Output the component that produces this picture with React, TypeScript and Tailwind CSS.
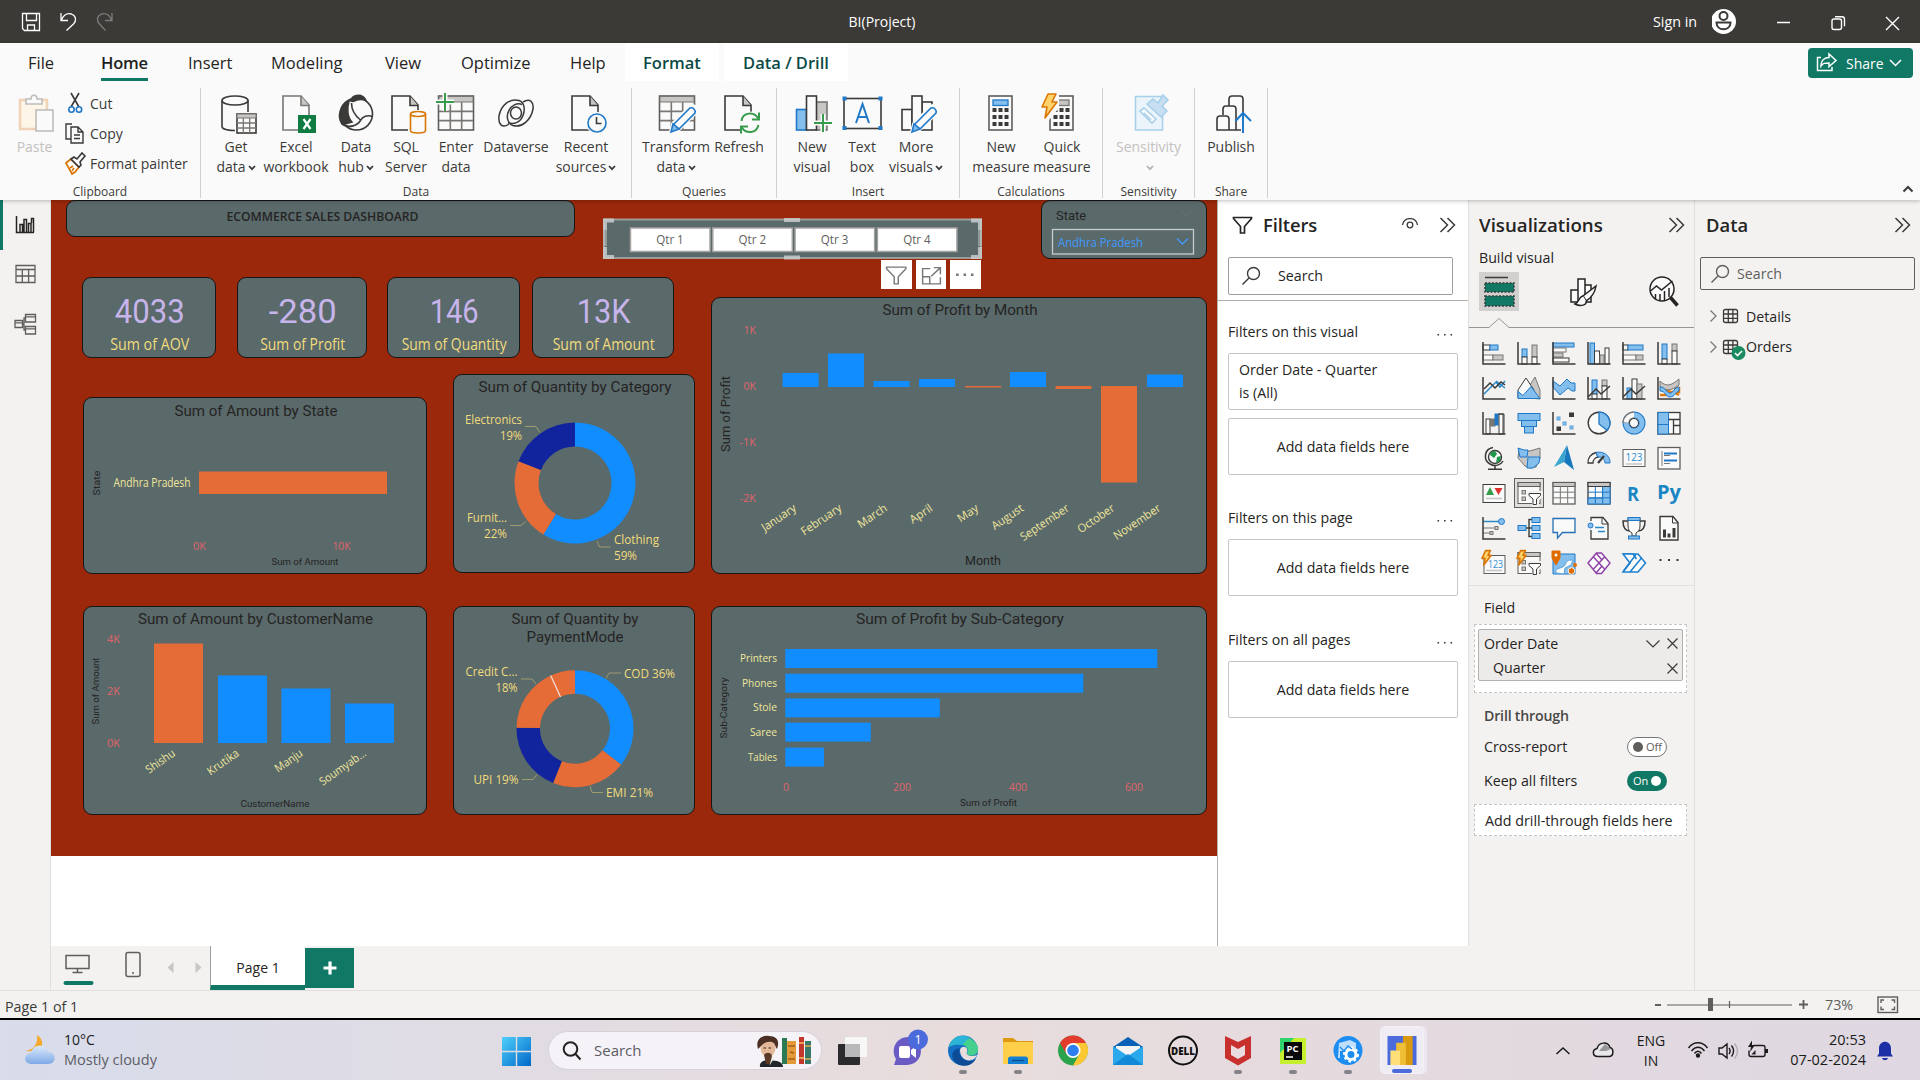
import type { ReactNode } from 'react';

const DARK = '#3b3a38';
const BLUE = '#1f78c8';
const SKY = '#83beec';
const GREY = '#c8c6c4';
const MID = '#797673';
const PAPER = '#fafafa';

type Kids = { children: ReactNode };

/* ---------- ribbon ---------- */

function Ico({ children, w = 40, h = 44 }: Kids & { w?: number; h?: number }) {
  return (
    <svg width={w} height={h} viewBox={`0 0 ${w} ${h}`} fill="none" stroke={DARK} strokeWidth="1.6" className="shrink-0 overflow-visible">
      {children}
    </svg>
  );
}

const Page = ({ x = 7, stroke = '#605e5c' }: { x?: number; stroke?: string }) => (
  <g stroke={stroke} fill={PAPER}>
    <path d={`M${x} 4h18l8 9v25h-26z`} />
    <path d={`M${x + 18} 4v9.5h8`} fill={GREY} />
  </g>
);

const GreenPlus = ({ x, y }: { x: number; y: number }) => (
  <g>
    <path d={`M${x - 9} ${y}h18M${x} ${y - 9}v18`} stroke={PAPER} strokeWidth="5" />
    <path d={`M${x - 9} ${y}h18M${x} ${y - 9}v18`} stroke="#379c4c" strokeWidth="2" />
  </g>
);

const Pencil = ({ x = 15, y = 16 }: { x?: number; y?: number }) => (
  <g transform={`translate(${x} ${y})`}>
    <path d="M0 24l2-8L19 -1a4 4 0 0 1 6 5L8 21z" fill={PAPER} stroke={PAPER} strokeWidth="4" />
    <path d="M2 17L19 0a4 4 0 0 1 5 5L8 21z" fill={PAPER} stroke={BLUE} />
    <path d="M0 24l2-8 6 5z" fill={SKY} stroke={BLUE} />
  </g>
);

const Bolt = ({ x = 0, y = 0, s = 1 }: { x?: number; y?: number; s?: number }) => (
  <path
    transform={`translate(${x} ${y}) scale(${s})`}
    d="M6 1h8l-4 8h5L3 25l2-11H0z"
    fill="#ffd26b"
    stroke="#d97706"
    strokeWidth={1.6 / s}
    strokeLinejoin="round"
  />
);

const Calculator = ({ screen, edge }: { screen: string; edge: string }) => (
  <g>
    <rect x="8" y="4" width="23" height="34" fill={PAPER} stroke="#605e5c" />
    <rect x="12" y="8" width="15" height="5.5" fill={screen} stroke={edge} strokeWidth="1.3" />
    <g fill={DARK} stroke="none">
      {[16, 23, 30].map((y) =>
        [11.5, 17.5, 23.5].map((x) => <rect key={`${x}-${y}`} x={x} y={y} width="4" height="4" />),
      )}
    </g>
  </g>
);

const gridLines = (x: number, y: number, w: number, h: number) =>
  `M${x} ${y + h / 3}h${w}M${x} ${y + (2 * h) / 3}h${w}M${x + w / 3} ${y}v${h}M${x + (2 * w) / 3} ${y}v${h}`;

const icons = {
  getData: (
    <Ico>
      <path d="M6 8.500v26c0 2.500 6 4 13 4s13-1.500 13-4v-26" fill={PAPER} />
      <ellipse cx="19" cy="8.500" rx="13" ry="4.500" fill={PAPER} />
      <rect x="19" y="20" width="23" height="22" fill={PAPER} stroke="none" />
      <rect x="21" y="22" width="19" height="19" fill={PAPER} />
      <rect x="21" y="22" width="19" height="4" fill={GREY} stroke={MID} strokeWidth="1" />
      <path d={gridLines(21, 26, 19, 15)} stroke={MID} strokeWidth="1.300" />
    </Ico>
  ),
  excel: (
    <Ico>
      <Page stroke="#797673" />
      <rect x="22" y="23" width="18" height="18" fill="#107c41" stroke="none" />
      <path d="M27.500 27l7 10M34.500 27l-7 10" stroke="#fff" strokeWidth="2.200" />
    </Ico>
  ),
  hub: (
    <Ico>
      <circle cx="20.500" cy="22" r="16" fill={PAPER} />
      <path d="M13 9C4 12 1 25 6 32c2 1 6-1 10-2-5-5-5-14-3-21z" fill={DARK} />
      <path d="M14.500 9C17 1.500 27 1.500 30 8.500c-5-2-9-1-13 1z" fill={DARK} />
      <path d="M15.500 11c0 7 4 13 9 17M6.500 32.500c7 4 15 1 18-4 2-4 7-6 12-4" />
    </Ico>
  ),
  sql: (
    <Ico>
      <Page x={6} stroke={DARK} />
      <path d="M22 18h20v24h-20z" fill={PAPER} stroke="none" />
      <path d="M24.500 22v16.500c0 1.500 3.500 2.500 7.500 2.500s7.500-1 7.500-2.500V22" fill={PAPER} stroke="#d97706" />
      <ellipse cx="32" cy="22" rx="7.500" ry="2.500" fill={PAPER} stroke="#d97706" />
    </Ico>
  ),
  enter: (
    <Ico>
      <rect x="2.500" y="4" width="35" height="34" fill={PAPER} stroke="#605e5c" />
      <rect x="3" y="4.500" width="34" height="5.500" fill={GREY} stroke={MID} strokeWidth="1" />
      <path d={gridLines(3, 10, 34, 28)} stroke={MID} />
      <GreenPlus x={9} y={10} />
    </Ico>
  ),
  dataverse: (
    <Ico>
      <path d="M13 32C6 37 2 32 3 24 5 13 14 6 23 8.500c6 2 6 10 4 15-2 6-9 10-15 7" strokeWidth="1.500" />
      <path d="M27 10c7-4 11 0 10 7-2 11-11 19-20 16.500-6-2-7-10-4-15 2-5 8-8 13-6" strokeWidth="1.500" />
      <ellipse cx="20" cy="21" rx="5.500" ry="6" strokeWidth="1.500" />
    </Ico>
  ),
  recent: (
    <Ico>
      <Page x={6} stroke={DARK} />
      <circle cx="31" cy="31" r="11" fill={PAPER} stroke="none" />
      <circle cx="31" cy="31" r="9" fill={PAPER} stroke={BLUE} />
      <path d="M30.500 25v6.500h5" />
    </Ico>
  ),
  transform: (
    <Ico>
      <rect x="3.500" y="4" width="35" height="34" fill={PAPER} stroke="#605e5c" />
      <rect x="4" y="4.500" width="34" height="5.500" fill={GREY} stroke={MID} strokeWidth="1" />
      <path d={gridLines(4, 10, 34, 28)} stroke={MID} />
      <Pencil x={15} y={16} />
    </Ico>
  ),
  refresh: (
    <Ico>
      <Page x={6} stroke={DARK} />
      <circle cx="31" cy="31" r="11.500" fill={PAPER} stroke="none" />
      <g stroke="#379c4c" strokeWidth="2">
        <path d="M22.500 29c1-9 13-10 17-2M39.500 33c-2 9-13 9-17 2" />
        <path d="M40 20.500v7h-7M22 41.500v-7h7" />
      </g>
    </Ico>
  ),
  newVisual: (
    <Ico>
      <rect x="4.500" y="17.500" width="10" height="20.500" fill={SKY} stroke={BLUE} />
      <rect x="24" y="10" width="11" height="28" fill={GREY} stroke={MID} />
      <rect x="14.500" y="4" width="10" height="34" fill={PAPER} />
      <GreenPlus x={31} y={31} />
    </Ico>
  ),
  textBox: (
    <Ico>
      <rect x="2" y="6.500" width="37" height="30" fill={PAPER} />
      <path d="M14 31l6.500-19L27 31M16 25h9" stroke={BLUE} strokeWidth="2" />
      <g fill={BLUE} stroke="none">
        <rect x="0.500" y="4.500" width="4" height="4" />
        <rect x="36.500" y="4.500" width="4" height="4" />
        <rect x="0.500" y="34" width="4" height="4" />
        <rect x="36.500" y="34" width="4" height="4" />
      </g>
    </Ico>
  ),
  moreVisuals: (
    <Ico>
      <rect x="6" y="17.500" width="10" height="20.500" fill={PAPER} />
      <rect x="26" y="10" width="10" height="28" fill={PAPER} />
      <rect x="16" y="4" width="10" height="34" fill={PAPER} />
      <Pencil x={16} y={16} />
    </Ico>
  ),
  newMeasure: (
    <Ico>
      <Calculator screen={SKY} edge={BLUE} />
    </Ico>
  ),
  quickMeasure: (
    <Ico>
      <Calculator screen={GREY} edge={MID} />
      <path d="M5 2h12v14l-10 12H3z" fill={PAPER} stroke="none" />
      <Bolt y={1} />
    </Ico>
  ),
  sensitivity: (
    <Ico>
      <g stroke="#a8d0ea" fill="#eaf4fa">
        <path d="M6.500 4.500h27v33.500h-27z" />
        <path d="M11 19l4-3 12 11-4 4z" fill={PAPER} />
        <path d="M15 21l7 7" />
        <path d="M18 12l6-5 5 4 5-8 5 5-6 6 5 5-6 6z" fill="#c7dff0" />
      </g>
    </Ico>
  ),
  publish: (
    <Ico>
      <path d="M18 14V7c0-2 1-3 3-3h8c2 0 3 1 3 3v31" fill={PAPER} />
      <path d="M12 23v-6c0-2 1-3 3-3h7c2 0 3 1 3 3v21" fill={PAPER} />
      <path d="M6 38V27c0-2 1-3 3-3h6c2 0 3 1 3 3v11zM6 38h26" fill={PAPER} />
      <path d="M33 21v20" stroke={PAPER} strokeWidth="6" />
      <path d="M32 41V22M24.500 29l7.500-8 8 8" stroke={BLUE} strokeWidth="2" />
    </Ico>
  ),
};

const Caret = ({ color = DARK }: { color?: string }) => (
  <svg width="8" height="6" viewBox="0 0 8 6" className="ml-0.5 inline-block" fill="none" stroke={color} strokeWidth="1.800">
    <path d="M1 1l3 3.200L7 1" />
  </svg>
);

function Cmd({ icon, a, b, caret, width, dim }: { icon: ReactNode; a: string; b?: string; caret?: boolean; width: string; dim?: boolean }) {
  return (
    <div className={`flex shrink-0 flex-col items-center ${width} ${dim ? 'text-[#c3c1bf]' : ''}`}>
      {icon}
      <span className="mt-px h-[20px] text-[14px] leading-[20px] tracking-[-0.050px] whitespace-nowrap">{a}</span>
      <span className="h-[20px] text-[14px] leading-[20px] whitespace-nowrap">
        {b}
        {caret && <Caret color={dim ? '#b5b3b1' : DARK} />}
      </span>
    </div>
  );
}

function Group({ label, width, pad = '', children }: Kids & { label: string; width: string; pad?: string }) {
  return (
    <div className={`mt-[7px] flex h-[110px] shrink-0 flex-col border-r border-[#d2d0ce] ${width}`}>
      <div className={`flex h-[97px] shrink-0 pt-[4px] ${pad}`}>{children}</div>
      <div className="h-[13px] text-center text-[12px] leading-[14px] text-[#3b3a39]">{label}</div>
    </div>
  );
}

function TitleBar() {
  return (
    <header className="flex h-[43px] shrink-0 items-center bg-[#3b3a37] text-white">
      <svg width="140" height="43" viewBox="0 0 140 43" fill="none" stroke="#fff" strokeWidth="1.300">
        <path d="M22.500 13.500h17v17H24.500l-2-2zM26.500 13.500v7h10v-7M27.500 30.500v-5.500h7v5.500" />
        <path d="M61 13v7.500h7M61.500 20c2-5 6-7 10-6 5 2 5 7 2 10l-7 6.500" />
        <path d="M112 13v7.500h-7M111.500 20c-2-5-6-7-10-6-5 2-5 7-2 10l6 6.500" stroke="#7d7c7a" />
      </svg>
      <div className="w-[1484px] text-center text-[14px]">BI(Project)</div>
      <div className="ml-[29px] text-[14.300px]">Sign in</div>
      <svg width="208" height="43" viewBox="1712 0 208 43" className="ml-auto" fill="none" stroke="#fff" strokeWidth="1.400">
        <circle cx="1723.500" cy="21.500" r="12.500" fill="#fff" stroke="none" />
        <circle cx="1723.500" cy="16" r="4" stroke={DARK} strokeWidth="2" />
        <path d="M1716.500 22.500h14c0 9-14 9-14 0z" stroke={DARK} strokeWidth="2" />
        <path d="M1777 22.500h13M1886 17l13 13M1899 17l-13 13" />
        <rect x="1832" y="19" width="9.500" height="10.500" rx="2" />
        <path d="M1835 16.800h7c2 0 2.500 1 2.500 2.500v7" />
      </svg>
    </header>
  );
}

function Ribbon() {
  return (
    <div className="relative z-10 h-[157px] shrink-0 bg-[#fafafa] shadow-[0_1px_4px_rgba(0,0,0,0.25)]">
      <nav className="flex h-[38px] text-[16.500px] leading-[39px] text-[#252423]">
        <span className="ml-[28px] w-[73px]">File</span>
        <span className="w-[87px] font-semibold text-[#201f1e]">
          <span className="inline-block h-[38px] border-b-[3px] border-[#117865] tracking-[-0.200px]">Home</span>
        </span>
        <span className="w-[83px]">Insert</span>
        <span className="w-[114px]">Modeling</span>
        <span className="w-[76px]">View</span>
        <span className="w-[109px]">Optimize</span>
        <span className="w-[55px]">Help</span>
        <span className="w-[94px] bg-white text-center font-semibold text-[#0c4a45]">Format</span>
        <span className="ml-[5px] w-[124px] bg-white text-center font-semibold text-[#0c4a45]">Data / Drill</span>
        <span className="mt-[5px] mr-[7px] ml-auto flex h-[30px] w-[105px] items-center rounded bg-[#117865] text-white">
          <svg width="38" height="30" viewBox="0 0 38 30" fill="none" stroke="#fff" strokeWidth="1.500">
            <path d="M13 9.500H9.500v13h14.500V19" />
            <path d="M13 18c0-6 4-8.500 8-8.500V6l7 6.500-7 6v-3.500c-4 0-6 0-8 3z" />
          </svg>
          <span className="text-[14px]">Share</span>
          <svg width="15" height="10" viewBox="0 0 15 10" className="ml-1" fill="none" stroke="#fff" strokeWidth="1.500">
            <path d="M2 2l5.500 5.500L13 2" />
          </svg>
        </span>
      </nav>
      <div className="flex h-[119px] text-[#3b3a39]">
        <Group label="Clipboard" width="w-[201px]">
          <div className="flex w-[62px] shrink-0 flex-col items-center pl-[7px] text-[#c3c1bf]">
            <Ico>
              <g opacity="0.6">
                <path d="M5 8h27v29H5z" fill="#fff3dd" stroke="#eab98a" strokeWidth="2.500" />
                <path d="M11 12V7h5c0-5 6-5 6 0h5v5z" fill={PAPER} stroke="#979593" />
                <rect x="21" y="18" width="17" height="21" fill={PAPER} stroke="#979593" />
              </g>
            </Ico>
            <span className="mt-px text-[14px] leading-[20px]">Paste</span>
          </div>
          <div className="-mt-[4px] flex flex-col text-[14px]">
            <span className="flex h-[30px] items-center">
              <Ico w={28} h={24}>
                <path d="M9 2l8 14M17 2L9 16" />
                <circle cx="9.500" cy="18.500" r="2.700" stroke={BLUE} />
                <circle cx="17" cy="18.500" r="2.700" stroke={BLUE} />
              </Ico>
              Cut
            </span>
            <span className="flex h-[30px] items-center">
              <Ico w={28} h={24}>
                <path d="M10 3H4v15h5M9 6h7l5 5v11H9zM16 6v5h5M12 14h6M12 17.500h6" strokeWidth="1.400" />
              </Ico>
              Copy
            </span>
            <span className="flex h-[30px] items-center whitespace-nowrap">
              <Ico w={28} h={24}>
                <path d="M4 12l5-4 8 8-4 5-3 2z" fill="#fff" stroke="#d97706" strokeWidth="1.800" />
                <path d="M8 17l3-2M10 20l2-3" stroke="#d97706" />
                <path d="M9 8l3-2 3 2 5-6 3 3-5 6 1 3-2 2z" fill={PAPER} />
              </Ico>
              Format painter
            </span>
          </div>
        </Group>
        <Group label="Data" width="w-[431px]" pad="pl-[5px]">
          <Cmd width="w-[60px]" icon={icons.getData} a="Get" b="data" caret />
          <Cmd width="w-[60px]" icon={icons.excel} a="Excel" b="workbook" />
          <Cmd width="w-[60px]" icon={icons.hub} a="Data" b="hub" caret />
          <Cmd width="w-[40px]" icon={icons.sql} a="SQL" b="Server" />
          <Cmd width="w-[60px]" icon={icons.enter} a="Enter" b="data" />
          <Cmd width="w-[60px]" icon={icons.dataverse} a="Dataverse" />
          <Cmd width="w-[80px]" icon={icons.recent} a="Recent" b="sources" caret />
        </Group>
        <Group label="Queries" width="w-[145px]" pad="pl-[8px]">
          <Cmd width="w-[72px]" icon={icons.transform} a="Transform" b="data" caret />
          <Cmd width="w-[54px]" icon={icons.refresh} a="Refresh" />
        </Group>
        <Group label="Insert" width="w-[183px]" pad="pl-[10px]">
          <Cmd width="w-[50px]" icon={icons.newVisual} a="New" b="visual" />
          <Cmd width="w-[50px]" icon={icons.textBox} a="Text" b="box" />
          <Cmd width="w-[58px]" icon={icons.moreVisuals} a="More" b="visuals" caret />
        </Group>
        <Group label="Calculations" width="w-[143px]" pad="pl-[10px]">
          <Cmd width="w-[62px]" icon={icons.newMeasure} a="New" b="measure" />
          <Cmd width="w-[60px]" icon={icons.quickMeasure} a="Quick" b="measure" />
        </Group>
        <Group label="Sensitivity" width="w-[92px]">
          <Cmd width="w-[91px]" icon={icons.sensitivity} a="Sensitivity" caret dim />
        </Group>
        <Group label="Share" width="w-[73px]">
          <Cmd width="w-[72px]" icon={icons.publish} a="Publish" />
        </Group>
        <svg width="12" height="8" viewBox="0 0 12 8" className="mt-[104px] mr-[6px] ml-auto" fill="none" stroke={DARK} strokeWidth="2">
          <path d="M1.500 6.500L6 2l4.500 4.500" />
        </svg>
      </div>
    </div>
  );
}

/* ---------- left rail ---------- */

function Rail() {
  return (
    <aside className="flex w-[51px] shrink-0 flex-col border-r border-[#e1dfdd] bg-[#f3f2f1]">
      {[0, 1, 2].map((i) => (
        <div key={i} className={`flex h-[50px] items-center border-l-[3px] pl-[9px] ${i === 0 ? 'border-[#117865]' : 'border-transparent'}`}>
          <svg width="26" height="26" viewBox="0 1 26 26" fill="none" stroke={i === 0 ? '#252423' : '#605e5c'} strokeWidth={i === 0 ? 1.5 : 1.3}>
            {i === 0 && <path d="M4.500 5v16.500h17.500M8 21.500v-8h2.500v8M12 21.500V8.500h2.500v13M16.500 21.500v-9H19v9M19.500 12V7.500H21.500v14" />}
            {i === 1 && <path d="M4 4.500h19v17H4zM4 8.500h19M4 15h19M10.300 8.500v13M16.600 8.500v13" />}
            {i === 2 && <path d="M13.500 3.500h10v7.500h-10zM13.500 15.500h10v7.500h-10zM3 9.500h7.500v7H3zM10.500 13h1.500V7h1.500M12 13v6h1.500M13.500 5.800h10M13.500 17.800h10M3 11.800h7.500" />}
          </svg>
        </div>
      ))}
    </aside>
  );
}

/* ---------- report canvas ---------- */

type TProps = { x: number; y: number; w?: number; s?: number; c?: string; a?: 'start' | 'middle' | 'end'; r?: number; f?: 'din' | 'ui'; b?: number; children: string };

function T({ x, y, w, s = 12, c = '#252423', a = 'middle', r, f = 'ui', b, children }: TProps) {
  return (
    <text
      x={x}
      y={y}
      fontSize={s}
      fill={c}
      textAnchor={a}
      fontWeight={b}
      textLength={w}
      lengthAdjust="spacingAndGlyphs"
      fontFamily={f === 'din' ? 'Roboto, sans-serif' : '"Open Sans", sans-serif'}
      transform={r ? `rotate(${r} ${x} ${y})` : undefined}
    >
      {children}
    </text>
  );
}

const YEL = '#f2dc7d';
const PALE = '#f0e69b';
const RED = '#e0656b';
const CB = '#118dff';
const CO = '#e66c37';
const CN = '#12239e';

/* A rounded report tile; its drawing shares the page coordinate system. */
function Tile({ x, y, w, h, children }: Kids & { x: number; y: number; w: number; h: number }) {
  return (
    <div className="absolute overflow-hidden rounded-[9px] border border-[#161616] bg-[#5a696a]" style={{ left: x - 51, top: y - 200, width: w, height: h }}>
      <svg className="-mt-px -ml-px block" width={w} height={h} viewBox={`${x} ${y} ${w} ${h}`}>
        {children}
      </svg>
    </div>
  );
}

function Ring({ cx, cy, R, r, parts }: { cx: number; cy: number; R: number; r: number; parts: [number, number, string][] }) {
  const p = (rad: number, deg: number) => {
    const t = ((deg - 90) * Math.PI) / 180;
    return `${cx + rad * Math.cos(t)} ${cy + rad * Math.sin(t)}`;
  };
  return (
    <g>
      {parts.map(([a, b, c]) => {
        const big = b - a > 180 ? 1 : 0;
        return <path key={a} fill={c} d={`M${p(R, a)}A${R} ${R} 0 ${big} 1 ${p(R, b)}L${p(r, b)}A${r} ${r} 0 ${big} 0 ${p(r, a)}Z`} />;
      })}
    </g>
  );
}

const kpis: [number, number, string, number, string, number][] = [
  [82, 134, '4033', 70, 'Sum of AOV', 79],
  [237, 130, '-280', 68, 'Sum of Profit', 85],
  [387, 133, '146', 49, 'Sum of Quantity', 105],
  [532, 142, '13K', 54, 'Sum of Amount', 102],
];

const months: [string, number, number, number, string, number][] = [
  ['January', 782.6, 373, 14, CB, 39],
  ['February', 828, 353.5, 33.5, CB, 46],
  ['March', 873.5, 381, 6, CB, 33],
  ['April', 919, 379, 8, CB, 25],
  ['May', 965, 386, 1.5, CO, 23],
  ['August', 1010, 372, 15, CB, 36],
  ['September', 1055.5, 386, 3, CO, 56],
  ['October', 1101, 386, 96.5, CO, 42],
  ['November', 1147, 374.5, 12.5, CB, 54],
];

const customers: [string, number, number, string, number][] = [
  ['Shishu', 154, 643.5, CO, 33],
  ['Krutika', 218, 675.5, CB, 36],
  ['Manju', 281.5, 688.5, CB, 31],
  ['Soumyab...', 345, 703.5, CB, 54],
];

const subs: [string, number, number, number][] = [
  ['Printers', 649, 372, 37],
  ['Phones', 673.7, 298, 35],
  ['Stole', 698.4, 154.5, 24],
  ['Saree', 722.6, 85.5, 27],
  ['Tables', 747.6, 38.7, 29],
];

function Report() {
  return (
    <div className="relative h-[656px] shrink-0 bg-[#9b280b]">
      <Tile x={66} y={200} w={509} h={37}>
        <T x={322.5} y={221} w={192} s={12.5} b={600}>ECOMMERCE SALES DASHBOARD</T>
      </Tile>

      {/* quarter slicer with its selection frame */}
      <svg className="absolute top-[16px] left-[551px]" width="382" height="46" viewBox="602 216 382 46" fill="none">
        <rect x="604" y="219.500" width="377" height="38.500" fill="#5a696a" stroke="#a5b0b0" strokeOpacity="0.8" strokeWidth="2" />
        {['Qtr 1', 'Qtr 2', 'Qtr 3', 'Qtr 4'].map((q, i) => (
          <g key={q}>
            <rect x={630.5 + i * 82.3} y="228" width="79.500" height="23.500" fill="#fff" stroke="#a7a3a1" strokeWidth="1.500" />
            <T x={670 + i * 82.3} y={244} w={27.5} s={12} c="#605e5c">{q}</T>
          </g>
        ))}
        <g stroke="#c8cccc" strokeOpacity="0.85" strokeWidth="4">
          <path d="M614 220.500h-9v10M971 220.500h9v10M614 257h-9v-10M971 257h9v-10M784 220h16M784 257.500h16" />
          <path d="M605 231v15M980 231v15" strokeOpacity="0.5" />
        </g>
      </svg>
      <div className="absolute top-[59.500px] left-[830px] flex gap-[4px]">
        {[0, 1, 2].map((i) => (
          <svg key={i} width="30.500" height="29.500" viewBox="0 0 30 29" className="bg-white" fill="none" stroke="#797775" strokeWidth="1.400">
            {i === 0 && <path d="M5.500 7h19v1.500L17 16.500v7h-4v-7L5.500 8.500z" />}
            {i === 1 && <path d="M14 8.500H6.500v15h17.500V17M6.500 16.500h7v7M15 16l8.500-8M17.500 7.500h6.500v6.500" />}
            {i === 2 && <path d="M6 14.500h2.500M13.300 14.500h2.500M20.600 14.500h2.500" strokeWidth="2.500" />}
          </svg>
        ))}
      </div>

      <Tile x={1041} y={200} w={166} h={59}>
        <T x={1056} y={220} w={30} s={12.5} a="start" f="din">State</T>
        <rect x="1052.500" y="229.500" width="141" height="24.500" fill="none" stroke="#c9cccc" strokeWidth="1.300" />
        <T x={1058} y={247} w={85} s={12.5} a="start" c="#3f9bff">Andhra Pradesh</T>
        <path d="M1177 238.500l5.500 5.500 5.500-5.500" fill="none" stroke="#3f9bff" strokeWidth="1.300" />
        <path d="M1181 210l5.500 5.500 5.500-5.500" fill="none" stroke="#6c6f6e" />
      </Tile>

      {kpis.map(([x, w, v, vw, l, lw]) => (
        <Tile key={l} x={x} y={277} w={w} h={81}>
          <T x={x + w / 2 + 0.7} y={323} w={vw} s={32.5} c="#c6b4ea" f="din">{v}</T>
          <T x={x + w / 2 + 0.7} y={350} w={lw} s={15.5} c={YEL}>{l}</T>
        </Tile>
      ))}

      <Tile x={83} y={397} w={344} h={177}>
        <T x={256} y={416} w={163} s={15} f="din">Sum of Amount by State</T>
        <T x={100} y={483} w={25} s={9} r={-90} f="din">State</T>
        <T x={190.5} y={487} w={77} a="end" c={PALE}>Andhra Pradesh</T>
        <rect x="199" y="471.500" width="188" height="22.500" fill={CO} />
        <T x={199.5} y={550} w={13} c={RED} s={11.5}>0K</T>
        <T x={341.5} y={550} w={18} c={RED} s={11.5}>10K</T>
        <T x={305} y={564.5} w={67} s={9.5} f="din">Sum of Amount</T>
      </Tile>

      <Tile x={453} y={374} w={242} h={199}>
        <T x={575} y={392} w={193} s={15} f="din">Sum of Quantity by Category</T>
        <Ring cx={575} cy={483} R={60.5} r={36.5} parts={[[0, 211.5, CB], [211.5, 291, CO], [291, 360, CN]]} />
        <T x={522} y={424} w={57} a="end" c={YEL}>Electronics</T>
        <T x={522} y={440} w={22} a="end" c={YEL}>19%</T>
        <T x={507} y={522} w={40} a="end" c={YEL}>Furnit...</T>
        <T x={507} y={538} w={23} a="end" c={YEL}>22%</T>
        <T x={614} y={544} w={45} a="start" c={YEL}>Clothing</T>
        <T x={614} y={560} w={23} a="start" c={YEL}>59%</T>
        <path d="M525 426.500h11l4 6M510 525.500h11l5-4M597 541l2.500 6h11" fill="none" stroke="#9d9c6c" />
      </Tile>

      <Tile x={711} y={297} w={496} h={277}>
        <T x={960} y={315} w={155} s={15} f="din">Sum of Profit by Month</T>
        <T x={730} y={414} w={76} s={13} r={-90} f="din">Sum of Profit</T>
        {['1K', '0K', '-1K', '-2K'].map((t, i) => (
          <T key={t} x={756} y={334 + i * 56} w={i > 1 ? 16.5 : 12.5} a="end" c={RED} s={11.5}>{t}</T>
        ))}
        {months.map(([m, x, y, h, c, w]) => (
          <g key={m}>
            <rect x={x} y={y} width="36" height={h} fill={c} />
            <T x={x + 14.5} y={510} w={w} a="end" c={PALE} r={-34} s={11.5}>{m}</T>
          </g>
        ))}
        <T x={983} y={564.5} w={36} s={13} f="din">Month</T>
      </Tile>

      <Tile x={83} y={606} w={344} h={209}>
        <T x={255.5} y={624} w={235} s={15} f="din">Sum of Amount by CustomerName</T>
        <T x={99} y={691} w={67} s={9.5} r={-90} f="din">Sum of Amount</T>
        {['4K', '2K', '0K'].map((t, i) => (
          <T key={t} x={113.5} y={642.7 + i * 52} w={13} c={RED} s={11.5}>{t}</T>
        ))}
        {customers.map(([n, x, y, c, w]) => (
          <g key={n}>
            <rect x={x} y={y} width="49" height={743 - y} fill={c} />
            <T x={x + 22} y={755} w={w} a="end" c={PALE} r={-35} s={11.5}>{n}</T>
          </g>
        ))}
        <T x={275} y={807} w={69} s={9.5} f="din">CustomerName</T>
      </Tile>

      <Tile x={453} y={606} w={242} h={209}>
        <T x={575} y={624} w={127} s={15} f="din">Sum of Quantity by</T>
        <T x={575} y={642} w={97} s={15} f="din">PaymentMode</T>
        <Ring cx={575} cy={728.7} R={58.5} r={35} parts={[[0, 128, CB], [128, 202, CO], [202, 271, CN], [271, 335.5, CO], [335.5, 360, CO]]} />
        <path d="M550.700 675.500l9.800 21.400" stroke="#f6e3da" strokeWidth="1.200" />
        <T x={624} y={677.7} w={51} a="start" c={YEL}>COD 36%</T>
        <T x={517.5} y={676} w={52} a="end" c={YEL}>Credit C...</T>
        <T x={517.5} y={692} w={22} a="end" c={YEL}>18%</T>
        <T x={518.5} y={784} w={45} a="end" c={YEL}>UPI 19%</T>
        <T x={606} y={797} w={47} a="start" c={YEL}>EMI 21%</T>
        <path d="M606 678.500l3-5.500h12M521 679h11l4 5M522 779.500h11l4-5M590 786l2 6.500h11" fill="none" stroke="#9d9c6c" />
      </Tile>

      <Tile x={711} y={606} w={496} h={209}>
        <T x={960} y={624} w={208} s={15} f="din">Sum of Profit by Sub-Category</T>
        <T x={727} y={708} w={61} s={9.5} r={-90} f="din">Sub-Category</T>
        {subs.map(([n, y, w, tw]) => (
          <g key={n}>
            <T x={777} y={y + 13} w={tw} a="end" c={PALE} s={11.5}>{n}</T>
            <rect x="785.300" y={y} width={w} height="19" fill={CB} />
          </g>
        ))}
        {[0, 200, 400, 600].map((n, i) => (
          <T key={n} x={786 + i * 116} y={791} w={n ? 18 : 6} c={RED} s={11.5}>{String(n)}</T>
        ))}
        <T x={988.5} y={806} w={57} s={9.5} f="din">Sum of Profit</T>
      </Tile>
    </div>
  );
}

/* ---------- right panes ---------- */

const Chevrons = () => (
  <svg width="17" height="16" viewBox="0 0 17 16" fill="none" stroke="#3b3a39" strokeWidth="1.500">
    <path d="M1.500 1l7 7-7 7M8.500 1l7 7-7 7" />
  </svg>
);

const Loupe = ({ color }: { color: string }) => (
  <svg width="20" height="20" viewBox="0 0 20 20" fill="none" stroke={color} strokeWidth="1.400">
    <circle cx="12.500" cy="7.500" r="6" />
    <path d="M8 12l-6.500 6.500" />
  </svg>
);

const Dots = () => (
  <svg width="16" height="4" viewBox="0 0 16 4" fill="#3b3a39">
    <path d="M0.500 1h1.600v1.600h-1.600zM7 1h1.600v1.600h-1.600zM13.500 1h1.600v1.600h-1.600z" />
  </svg>
);

const FilterHead = ({ children }: Kids) => (
  <div className="flex h-[20px] items-center justify-between pr-[5px] leading-[20px]">
    <span>{children}</span>
    <span className="mt-[5px]"><Dots /></span>
  </div>
);

const AddBox = () => <div className="flex h-[57px] w-[230px] items-center justify-center rounded-[2px] border border-[#c8c6c4] bg-white">Add data fields here</div>;

function Filters() {
  return (
    <aside className="flex w-[252px] shrink-0 flex-col border-r border-l border-r-[#e1dfdd] border-l-[#b3b0ad] bg-white text-[14.200px] text-[#252423]">
      <div className="flex h-[49px] items-center pt-px pr-[12px] pl-[14px]">
        <svg width="21" height="18" viewBox="0 0 21 18" fill="none" stroke="#252423" strokeWidth="1.700">
          <path d="M1.500 1.500h18v1l-7 8V17h-4v-6.500l-7-8z" />
        </svg>
        <span className="ml-[10px] text-[18.400px] font-semibold tracking-[-0.100px]">Filters</span>
        <svg width="18" height="14" viewBox="0 1 18 14" className="mr-[20px] ml-auto" fill="none" stroke="#3b3a39" strokeWidth="1.300">
          <path d="M1.500 8C3 -0.500 15 -0.500 16.500 8" />
          <circle cx="9" cy="8" r="2.800" />
        </svg>
        <Chevrons />
      </div>
      <div className="mt-[8px] ml-[10px] flex h-[38px] w-[225px] items-center rounded-[2px] border border-[#a19f9d] pl-[12px]">
        <Loupe color="#3b3a39" />
        <span className="ml-[17px]">Search</span>
      </div>
      <div className="mt-[5px] border-t border-[#b3b0ad]" />
      <div className="pt-[21px] pr-[10px] pl-[10px]">
        <FilterHead>Filters on this visual</FilterHead>
        <div className="mt-[11px] mb-[8px] h-[57px] w-[230px] rounded-[2px] border border-[#c8c6c4] pt-[4px] pl-[10px] leading-[23px]">
          Order Date - Quarter
          <br />
          is (All)
        </div>
        <AddBox />
        <div className="h-[33px]" />
        <FilterHead>Filters on this page</FilterHead>
        <div className="h-[11px]" />
        <AddBox />
        <div className="h-[34px]" />
        <FilterHead>Filters on all pages</FilterHead>
        <div className="h-[11px]" />
        <AddBox />
      </div>
    </aside>
  );
}

type B = [number, number, number, number, string, string];
const Bars = ({ list }: { list: B[] }) => (
  <>
    {list.map(([x, y, w, h, f, s], i) => (
      <rect key={i} x={x} y={y} width={w} height={h} fill={f} stroke={s} />
    ))}
  </>
);
const Axis = () => <path d="M1 1v22h22.500" stroke={DARK} strokeWidth="1.500" />;
const Num = ({ x = 12, y = 16.5, w = 17 }: { x?: number; y?: number; w?: number }) => (
  <text x={x} y={y} textAnchor="middle" fontSize="10.500" fill="#2f8fd3" stroke="none" textLength={w} lengthAdjust="spacingAndGlyphs" fontFamily='"Open Sans", sans-serif'>
    123
  </text>
);
const Funnel = () => (
  <g>
    <path d="M11 11h14v4l-4 4v6h-5v-6l-5-4z" fill="#f3f2f1" stroke="#f3f2f1" strokeWidth="2" />
    <path d="M12 12.500h11.500v2L19.500 18v5.500h-3.500V18L12 14.500z" fill="#fff" stroke={DARK} />
  </g>
);
const SlicerFace = () => (
  <g>
    <rect x="1" y="1.500" width="22" height="21" fill={PAPER} stroke="#605e5c" />
    <rect x="1" y="1.500" width="22" height="4" fill={GREY} stroke="#605e5c" />
    <Bars list={[[5, 9.5, 3.5, 3.5, GREY, MID], [5, 16, 3.5, 3.5, GREY, MID]]} />
    <Funnel />
  </g>
);

const vizIcons: ReactNode[] = [
  <><Bars list={[[1, 4, 7, 5, PAPER, DARK], [8, 4, 8, 5, SKY, BLUE], [1, 14, 10, 5, PAPER, MID], [11, 14, 10, 5, GREY, MID]]} /><Axis /></>,
  <><Bars list={[[5, 8, 5, 8, SKY, BLUE], [5, 16, 5, 7, PAPER, DARK], [15, 4, 5, 12, GREY, MID], [15, 16, 5, 7, PAPER, DARK]]} /><Axis /></>,
  <><Bars list={[[1, 2, 21, 4, SKY, BLUE], [1, 7, 13, 4, PAPER, MID], [1, 12, 10, 4, GREY, MID], [1, 17, 16, 4, PAPER, DARK]]} /><Axis /></>,
  <><Bars list={[[3, 2, 4.5, 21, SKY, BLUE], [7.5, 10, 5, 13, PAPER, DARK], [13, 14, 4, 9, GREY, MID], [18, 7, 4, 16, PAPER, DARK]]} /><Axis /></>,
  <><Bars list={[[1, 4, 5, 5, PAPER, DARK], [6, 4, 15, 5, SKY, BLUE], [1, 14, 13, 5, PAPER, MID], [14, 14, 7, 5, GREY, MID]]} /><Axis /></>,
  <><Bars list={[[5, 3, 5, 15, SKY, BLUE], [5, 18, 5, 5, PAPER, DARK], [15, 3, 5, 7, GREY, MID], [15, 10, 5, 13, PAPER, DARK]]} /><Axis /></>,
  <><path d="M2 18l12-12 4 5 5-6M14 5l9 7" stroke="#2b88c8" strokeWidth="1.500" /><path d="M2 13l6-6 5 5 6-6 4 3" stroke={DARK} strokeWidth="1.500" /><Axis /></>,
  <><path d="M13 22V9l5-8 5 13v9z" fill={GREY} stroke={MID} /><path d="M1 22V14l8-12 8 12-4 8z" fill={PAPER} stroke={DARK} /><path d="M1 22.500v-7l5 4 8-9 9 12z" fill={SKY} stroke={BLUE} /></>,
  <><path d="M1 5l7 5 7-7 4 4h4v8h-3l-4-3-8 7-7-8z" fill={SKY} stroke={BLUE} /><Axis /></>,
  <><Bars list={[[5, 4, 5, 14, SKY, BLUE], [5, 18, 5, 5, PAPER, DARK], [15, 4, 5, 6, GREY, MID], [15, 10, 5, 13, PAPER, DARK]]} /><path d="M1 21l8-8 5 5 9-8" stroke={DARK} strokeWidth="1.500" /><Axis /></>,
  <><Bars list={[[5, 12, 5, 11, SKY, BLUE], [10, 3, 5, 20, PAPER, DARK], [15, 8, 5, 15, GREY, MID]]} /><path d="M1 21l8-8 5 5 9-8" stroke={DARK} strokeWidth="1.500" /><Axis /></>,
  <><path d="M3 13h6l4 3h9v-4h-5M3 19h8l5-3 6 3" stroke="#e07b10" strokeWidth="2.500" /><path d="M3 5c6 6 11 5 19-2v6c-8 6-12 6-19 2z" fill={GREY} stroke={MID} /><path d="M3 11c6 0 6 6 10 6s4-6 9-6v4c-4 1-4 6-9 6S9 15 3 15z" fill={SKY} stroke={BLUE} /><Axis /></>,
  <><Bars list={[[4, 8, 4, 15, PAPER, DARK], [8, 8, 5, 7, MID, MID], [13, 3, 3, 11, BLUE, BLUE], [17, 3, 4, 20, PAPER, DARK]]} /><path d="M16 3h6v20" stroke={DARK} /><Axis /></>,
  <Bars list={[[1, 2.5, 22, 7, SKY, BLUE], [4.5, 9.5, 15, 6, SKY, BLUE], [7.5, 15.5, 9, 6.5, SKY, BLUE]]} />,
  <><Bars list={[[5, 6, 3, 3, SKY, '#5ba3dc'], [11, 11, 3, 3, SKY, '#5ba3dc'], [18, 15, 3, 3, SKY, '#5ba3dc'], [17.5, 2, 4, 3.5, DARK, DARK], [5, 16, 3.5, 3.5, DARK, DARK]]} /><Axis /></>,
  <><circle cx="12" cy="12" r="10.800" fill={PAPER} stroke={DARK} strokeWidth="1.400" /><path d="M12 1.200A10.800 10.800 0 0 1 20 19.300L12 13z" fill={SKY} stroke={BLUE} strokeWidth="1.300" /></>,
  <><circle cx="12" cy="12" r="8" stroke={BLUE} strokeWidth="7" /><circle cx="12" cy="12" r="8" stroke={SKY} strokeWidth="5" /><path d="M12 4a8 8 0 0 0-8 8" stroke={MID} strokeWidth="7" /><path d="M12 4a8 8 0 0 0-8 7.500" stroke={PAPER} strokeWidth="4.500" /><circle cx="12" cy="12" r="4.500" fill={PAPER} stroke={DARK} /></>,
  <><rect x="1" y="1.500" width="22" height="21.500" fill={PAPER} stroke={DARK} strokeWidth="1.300" /><Bars list={[[1, 1.5, 10.5, 12, SKY, BLUE], [1, 13.5, 10.5, 9.5, SKY, BLUE]]} /><path d="M11.500 8.500H23M16.500 8.500V23M16.500 14.500H23" stroke={DARK} strokeWidth="1.300" /></>,
  <><circle cx="13" cy="11" r="6.500" fill={PAPER} stroke={DARK} strokeWidth="1.400" /><path d="M9 6l4-1 2 3-3 4-4-3zM15 11l4-1-1 5-4 2z" fill="#1f9a4b" /><path d="M11 1.500C2 3 1 14 8 18c5 3 11 1 13-3M13 20v3M6 23.300h14" stroke={DARK} strokeWidth="1.500" /></>,
  <><path d="M2 3l5 2h6l10-3v10l-4 9-6 1-5-2-7-8z" fill={GREY} stroke={MID} /><path d="M1 2l6 2h4l-1 7H3z" fill={SKY} stroke={BLUE} /><path d="M11 11h12l-1 6-6 5h-6z" fill={SKY} stroke={BLUE} /></>,
  <><path d="M15 -1L2 21l10-5z" fill="#3aa6d0" stroke="none" /><path d="M15 -1l7 25-10-8z" fill="#1878bd" stroke="none" /></>,
  <><path d="M1 17a11 10 0 0 1 8-10.500L11 11a6 6 0 0 0-5 6z" fill={PAPER} stroke={DARK} strokeWidth="1.300" /><path d="M9 6.500A11 10 0 0 1 23 17h-5a6 6 0 0 0-7-6z" fill={SKY} stroke={BLUE} /><path d="M11 17l6-7" stroke={DARK} strokeWidth="2.200" /></>,
  <><rect x="1" y="3.500" width="22" height="17" fill={PAPER} stroke="#605e5c" /><Num y={15} /><path d="M4 18h16" stroke={GREY} strokeWidth="1.500" /></>,
  <><rect x="1" y="1.500" width="22" height="21.500" fill={PAPER} stroke="#605e5c" strokeWidth="1.300" /><path d="M5 5v15M7 9.500h6M7 17.500h6" stroke={MID} /><path d="M7 7.500h13M7 14.500h13" stroke={BLUE} strokeWidth="2" /></>,
  <><rect x="1" y="3.500" width="22" height="18" fill={PAPER} stroke={DARK} /><path d="M4 14l4-8 4 8z" fill="#379c4c" /><path d="M12.500 7h8l-4 7z" fill="#e03131" /><path d="M4 17.500h16" stroke={GREY} strokeWidth="1.500" /></>,
  <SlicerFace />,
  <><rect x="1" y="1.500" width="22" height="21.500" fill={PAPER} stroke="#605e5c" strokeWidth="1.300" /><rect x="1" y="1.500" width="22" height="4" fill={GREY} stroke="#605e5c" /><path d={gridLines(1, 5.5, 22, 17)} stroke={MID} /></>,
  <><rect x="1" y="1.500" width="22" height="21.500" fill={PAPER} stroke={DARK} strokeWidth="1.300" /><path d="M15.500 5.500H23V23H1v-6h14.500z" fill={SKY} stroke={BLUE} /><rect x="1" y="1.500" width="22" height="4" fill={GREY} stroke={DARK} /><path d={gridLines(1, 5.5, 22, 17)} stroke={BLUE} /></>,
  <text x="11" y="20" textAnchor="middle" fontSize="20" fontWeight="700" fill="#1b86c4" stroke="none" textLength="12" lengthAdjust="spacingAndGlyphs" fontFamily='"Open Sans", sans-serif'>R</text>,
  <text x="12" y="18" textAnchor="middle" fontSize="20" fontWeight="700" fill="#1b86c4" stroke="none" textLength="24" lengthAdjust="spacingAndGlyphs" fontFamily='"Open Sans", sans-serif'>Py</text>,
  <><path d="M1 5.500h16" stroke="#2b88c8" strokeWidth="1.500" /><circle cx="19.500" cy="5.500" r="3" fill={SKY} stroke={BLUE} /><path d="M1 12h12M1 17h7" stroke={MID} /><Bars list={[[13, 10.5, 3, 3, GREY, MID], [8, 15.5, 3, 3, GREY, MID]]} /><Axis /></>,
  <><path d="M9 12h4M20 3.500h-8v17h8M12 12h3" stroke={DARK} strokeWidth="1.400" /><Bars list={[[1, 9.5, 8, 5, SKY, BLUE], [15, 1.5, 8, 5, SKY, BLUE], [15, 9.5, 8, 5, SKY, BLUE], [15, 17.5, 8, 5, SKY, BLUE]]} /></>,
  <path d="M1 2.500h22v14H10.500L5.500 22v-5.500H1z" fill={PAPER} stroke="#2470b3" strokeWidth="1.300" />,
  <><path d="M4 5V1.500h12l5 6V23H4v-9" fill={PAPER} stroke={DARK} strokeWidth="1.300" /><path d="M15 1.500V8h6" stroke={DARK} /><circle cx="3.500" cy="9.500" r="2.500" fill={SKY} stroke={BLUE} /><path d="M8 11.500h9M11 15.500h7" stroke="#2b88c8" strokeWidth="1.300" /></>,
  <><path d="M6 5H1c0 8 3 10 7 10M18 5h5c0 8-3 10-7 10" stroke={DARK} strokeWidth="1.500" /><path d="M6 2h12v8c0 4-2 6-4 7v3h-4v-3c-2-1-4-3-4-7z" fill={PAPER} stroke={DARK} /><Bars list={[[6, 1.5, 12, 3, SKY, BLUE], [6.5, 20, 11, 3, SKY, BLUE]]} /></>,
  <><path d="M3 .500h13l5 6V24H3z" fill={PAPER} stroke={DARK} strokeWidth="1.400" /><path d="M15.500 .500V7H21" stroke={DARK} /><path d="M7.500 21.500v-8M12 21.500v-4M17 21.500V12" stroke={DARK} strokeWidth="3" /></>,
  <><rect x="2" y="4.500" width="21" height="18" fill={PAPER} stroke="#605e5c" /><Num x={13.5} y={16.5} w={15} /><path d="M4 19.500h16" stroke={GREY} strokeWidth="1.500" /><Bolt x={0} y={-1} s={0.6} /></>,
  <><SlicerFace /><Bolt x={0} y={-1} s={0.6} /></>,
  <><path d="M1 22V3h22v20H1z" fill={SKY} stroke={BLUE} /><path d="M4 22c-2-6 7-4 9-8s2-5 8-5l-2 5-6 3-1 6z" fill={PAPER} stroke="#5ba3dc" /><path d="M0 0h8v7l-4 7-4-7z" fill="#e06c00" stroke="#e06c00" /><circle cx="4" cy="4" r="1.500" fill={PAPER} /><circle cx="19.500" cy="20" r="3.300" fill="#e06c00" stroke="#f3f2f1" /><circle cx="23" cy="14" r="2" fill="#e06c00" /></>,
  <g stroke="#8c3fa5" fill={PAPER} strokeWidth="1.400"><path d="M1 12L9.500 2h5L23 12l-8.500 10.500h-5z" /><path d="M6.500 6l11 12M17.500 6l-11 12M9 2l6 7M9 22l6-7" /></g>,
  <g stroke="#1b7fd0" fill={PAPER} strokeWidth="1.500"><path d="M1 3h15l7.500 9-7.500 9H1l7-9z" /><path d="M1.500 20L14 3.500M8 21L19.500 7M1 3h10l3.500 5" /></g>,
  <path d="M2.500 9h2M11 9h2M19.500 9h2" stroke={DARK} strokeWidth="2" />,
];

function Visualizations() {
  const closeX = (
    <svg width="11" height="11" viewBox="0 0 11 11" fill="none" stroke="#3b3a39" strokeWidth="1.200">
      <path d="M.500 .500l10 10M10.500 .500l-10 10" />
    </svg>
  );
  return (
    <aside className="flex w-[226px] shrink-0 flex-col border-r border-[#e1dfdd] bg-[#f3f2f1] text-[14.200px] text-[#252423]">
      <div className="flex h-[49px] items-center justify-between pt-px pr-[9px] pl-[10px]">
        <span className="text-[18.700px] font-semibold">Visualizations</span>
        <Chevrons />
      </div>
      <div className="h-[23px] pl-[10px] text-[14.200px] leading-[18px] font-medium">Build visual</div>
      <div className="flex h-[39px] pl-[10px]">
        <div className="flex h-[39px] w-[40px] justify-center bg-[#d2d0ce]">
          <svg width="34" height="39" viewBox="0 0 34 39" fill="none">
            <path d="M3 5.500h23" stroke={DARK} strokeWidth="1.500" />
            <rect x="3" y="11" width="29" height="9" fill="#117865" stroke={DARK} strokeWidth="1.500" strokeDasharray="2 1.500" />
            <rect x="3" y="24" width="29" height="10" fill="#117865" stroke={DARK} strokeWidth="1.500" strokeDasharray="2 1.500" />
          </svg>
        </div>
        <svg width="30" height="32" viewBox="0 0 30 32" className="mt-[5px] ml-[49px]" fill={PAPER} stroke="#252423" strokeWidth="1.500">
          <path d="M3 13h7v12H3zM10 2h7v23h-7zM17 8h6v17h-6z" />
          <path d="M28 9L15 19l3 5c5-3 9-9 10-15z" />
          <path d="M15 19c-5 1-3 6-8 8 6 3 12 1 11-3" />
        </svg>
        <svg width="34" height="34" viewBox="0 0 34 34" className="mt-[3px] ml-[49px]" fill="none" stroke="#252423" strokeWidth="1.500">
          <circle cx="15" cy="14" r="12" fill={PAPER} />
          <path d="M3.500 16l6-5 5 4 11-9M8.500 24v-5M13 26v-7M17.500 26V16M22 22v-9" />
          <path d="M23.500 22.500l7 8" strokeWidth="3.500" />
        </svg>
      </div>
      <svg width="225" height="17" viewBox="1469 310.500 225 17" fill="none" stroke="#979593">
        <path d="M1469 327h20l10-9 10 9h185" />
      </svg>
      <div className="grid h-[258px] grid-cols-6 content-start border-b border-[#e1dfdd] pt-[7px] pr-[8px] pl-[7px]">
        {vizIcons.map((icon, i) => (
          <div key={i} className="flex h-[35px] w-[35px] items-center justify-center">
            <div className={i === 25 ? 'border border-[#605e5c] bg-[#e1dfdd] p-[2px]' : 'p-[3px]'}>
              <svg width="24" height="24" viewBox="0 0 24 24" fill="none" className="overflow-visible">
                {icon}
              </svg>
            </div>
          </div>
        ))}
      </div>
      <div className="mt-[12px] ml-[15px] h-[20px] leading-[20px]">Field</div>
      <div className="mt-[6px] ml-[5px] h-[69px] w-[213px] border border-dashed border-[#c8c6c4] bg-white p-[4px]">
        <div className="-ml-px h-[52px] w-[205px] rounded-[2px] border border-[#b3b0ad] bg-[#edebe9] pl-[5px]">
          <div className="flex h-[27px] items-center pr-[4px]">
            <span className="mr-auto">Order Date</span>
            <svg width="14" height="8" viewBox="0 0 14 8" className="mr-[7px]" fill="none" stroke="#3b3a39" strokeWidth="1.200">
              <path d="M.500 .500L7 7 13.500 .500" />
            </svg>
            {closeX}
          </div>
          <div className="flex h-[22px] items-center justify-between pr-[4px] pl-[9px]">
            Quarter
            {closeX}
          </div>
        </div>
      </div>
      <div className="mt-[13px] ml-[15px] h-[20px] leading-[20px] font-semibold text-[#4a4846] tracking-[-0.200px]">Drill through</div>
      <div className="mt-[11px] flex h-[20px] items-center justify-between pr-[27px] pl-[15px]">
        Cross-report
        <span className="flex h-[20px] w-[40px] items-center rounded-full border border-[#797775] bg-white pl-[5px] text-[11px] text-[#605e5c]">
          <span className="mr-[3px] size-[10px] rounded-full bg-[#605e5c]" />
          Off
        </span>
      </div>
      <div className="mt-[14px] flex h-[20px] items-center justify-between pr-[27px] pl-[15px]">
        Keep all filters
        <span className="flex h-[20px] w-[40px] items-center rounded-full bg-[#117865] pl-[6px] text-[11px] text-white">
          On
          <span className="ml-[3px] size-[10px] rounded-full bg-white" />
        </span>
      </div>
      <div className="mt-[13px] ml-[5px] flex h-[32px] w-[213px] items-center border border-dashed border-[#c8c6c4] bg-white pt-px pl-[10px] text-[14.300px] whitespace-nowrap">Add drill-through fields here</div>
    </aside>
  );
}

function DataPane() {
  return (
    <aside className="flex min-w-0 flex-1 flex-col bg-[#f3f2f1] text-[14.200px] text-[#252423]">
      <div className="flex h-[49px] items-center justify-between pt-px pr-[9px] pl-[11px]">
        <span className="text-[18.400px] font-semibold">Data</span>
        <Chevrons />
      </div>
      <div className="mt-[8px] ml-[5px] flex h-[33px] w-[215px] items-center rounded-[2px] border border-[#605e5c] pl-[9px] text-[#605e5c]">
        <Loupe color="#605e5c" />
        <span className="mt-px ml-[7px]">Search</span>
      </div>
      <div className="mt-[11px]">
        {['Details', 'Orders'].map((n) => (
          <div key={n} className="flex h-[30.500px] items-center pl-[16px]">
            <svg width="35" height="24" viewBox="0.500 0 35 24" className="overflow-visible" fill="none" stroke="#3b3a39" strokeWidth="1.300">
              <path d="M0 6.500l5.500 5.500L0 17.500" stroke="#797775" />
              <rect x="13" y="5.500" width="14" height="13" rx="2" />
              <path d="M13 10h14M13 14.300h14M17.800 5.500v13M22.400 5.500v13" />
              {n === 'Orders' && (
                <g>
                  <circle cx="28" cy="18" r="7" fill="#1a8a5f" stroke="none" />
                  <path d="M24.500 18l2.500 2.500 4.500-4.500" stroke="#fff" strokeWidth="1.600" />
                </g>
              )}
            </svg>
            {n}
          </div>
        ))}
      </div>
    </aside>
  );
}

/* ---------- bottom bars ---------- */

function PageTabs() {
  return (
    <div className="flex h-[44px] shrink-0 bg-[#f3f2f1]">
      <svg width="159" height="44" viewBox="51.500 946 159 44" fill="none" stroke="#605e5c" strokeWidth="1.500">
        <path d="M66.500 955.500h23v13h-23zM78 968.500v4M73 972.500h10" />
        <rect x="64" y="981" width="30" height="4" rx="2" fill="#117865" stroke="none" />
        <rect x="126.500" y="952.500" width="14" height="24" rx="2" />
        <path d="M132.500 973h2" />
        <path d="M174 962v11l-6-5.500zM196 962v11l6-5.500z" fill="#c8c6c4" stroke="none" />
      </svg>
      <div className="flex w-[95px] items-center justify-center border-b-[5px] border-l border-b-[#117865] border-l-[#a19f9d] bg-white pt-[4px] text-[14px] font-medium">Page 1</div>
      <div className="mt-[2px] flex h-[40px] w-[49px] items-center justify-center bg-[#117865]">
        <svg width="14" height="14" viewBox="0 0 14 14" stroke="#fff" strokeWidth="3.200">
          <path d="M7 .500v13M.500 7h13" />
        </svg>
      </div>
    </div>
  );
}

function StatusBar() {
  return (
    <div className="flex h-[30px] shrink-0 items-center border-t border-b-2 border-t-[#e1dfdd] border-b-black bg-[#f3f2f1] pl-[5px] text-[14.300px] text-[#3b3a39]">
      <span className="mr-auto pt-1">Page 1 of 1</span>
      <svg width="160" height="24" viewBox="1653 994 160 24" fill="none" stroke="#605e5c">
        <path d="M1655 1006h6" strokeWidth="2" />
        <path d="M1667 1006h125M1729.500 1002v7" strokeWidth="1.200" />
        <path d="M1710.500 999v13" strokeWidth="5" />
        <path d="M1799 1005.500h9M1803.500 1001v9" strokeWidth="1.800" />
      </svg>
      <span className="ml-[12px] w-[30px] text-[14.300px] text-[#605e5c]">73%</span>
      <svg width="22" height="18" viewBox="0 0 22 18" className="mt-px mr-[21px] ml-[22px]" fill="none" stroke="#605e5c" strokeWidth="1.400">
        <rect x="1" y="1" width="19.500" height="15.500" />
        <path d="M4 7V4h3M14.500 4h3v3M4 10.500v3h3M14.500 13.500h3v-3" />
      </svg>
    </div>
  );
}

const TaskApp = ({ children, dot }: Kids & { dot?: boolean }) => (
  <div className="flex w-[55px] shrink-0 flex-col items-center pt-[13px]">
    <svg width="34" height="34" viewBox="0 0 34 34" fill="none" className="overflow-visible">
      {children}
    </svg>
    {dot && <span className="mt-[3px] h-[4px] w-[8px] rounded-full bg-[#85838a]" />}
  </div>
);

function Taskbar() {
  return (
    <footer className="flex h-[61px] shrink-0 bg-linear-to-r from-[#d8dceb] via-[#e8dcdc] to-[#dfd8e2] text-[14.500px] text-[#1b1b1b]">
      <svg width="64" height="61" viewBox="0 1019 64 61" fill="none">
        <defs>
          <linearGradient id="cl" x1="0" y1="0" x2="0" y2="1">
            <stop offset="0" stopColor="#dbe9fb" />
            <stop offset="1" stopColor="#7ea9e6" />
          </linearGradient>
          <linearGradient id="win" x1="0" y1="0" x2="1" y2="1">
            <stop offset="0" stopColor="#4fd0fb" />
            <stop offset="1" stopColor="#0067c8" />
          </linearGradient>
        </defs>
        <path d="M37 1034c9 6 7 18-11 16 9-2 12-8 11-16z" fill="#f2a92c" />
        <path d="M32 1063c-9 0-9-10-1-11 1-9 15-10 17-1 9 0 9 12 0 12z" fill="url(#cl)" />
      </svg>
      <div className="w-[438px] pt-[10px] leading-[20px]">
        <div className="text-[14px]">10°C</div>
        <div className="text-[#5c5c66]">Mostly cloudy</div>
      </div>
      <svg width="29" height="29" viewBox="0 0 29 29" className="mt-[17px]" fill="url(#win)">
        <path d="M0 0h13.800v13.800H0zM15.200 0H29v13.800H15.200zM0 15.200h13.800V29H0zM15.200 15.200H29V29H15.200z" />
      </svg>
      <div className="mt-[11px] ml-[17px] flex h-[39px] w-[274px] items-center rounded-full border border-[#d5d0da] bg-[#f5f3f8] pl-[13px] text-[#5c5c66]">
        <svg width="20" height="20" viewBox="0 0 20 20" fill="none" stroke="#252423" strokeWidth="2">
          <circle cx="8.500" cy="8" r="6.800" />
          <path d="M13.500 13l5 5.500" />
        </svg>
        <span className="ml-[12px] text-[15px]">Search</span>
        <svg width="56" height="32" viewBox="756 1035 56 32" className="mr-[9px] ml-auto">
          <path d="M760 1067c-1-5 4-7 8-7l9 1c4 1 6 3 6 6z" fill="#22262b" />
          <path d="M767 1058l3 7 4-7z" fill="#eee" />
          <ellipse cx="768" cy="1048" rx="7.500" ry="9" fill="#e3b898" />
          <path d="M758 1049c-3-10 4-14 11-13 8 0 11 5 8 13-2-3-2-6-5-7-5-1-7 1-9 2z" fill="#4a2f22" />
          <path d="M764 1055c2-3 7-3 8 1l-2 8h-4z" fill="#5a3a26" />
          <path d="M763.500 1048h2.500M768.500 1048h2.500" stroke="#3a241a" strokeWidth="1.200" />
          <rect x="782" y="1038" width="5" height="26" fill="#2b7a55" />
          <rect x="787" y="1041" width="9" height="23" fill="#e29a3a" />
          <path d="M788 1046h7M788 1059h7M790 1052l4 1" stroke="#a4611a" strokeWidth="1.500" />
          <rect x="799" y="1037" width="5" height="27" fill="#c2382c" />
          <path d="M799 1043h5M799 1058h5" stroke="#f0c060" strokeWidth="1.500" />
          <rect x="805" y="1041" width="6" height="23" fill="#38786b" />
          <path d="M805 1046h6M805 1059h6" stroke="#e0aa50" strokeWidth="1.500" />
        </svg>
      </div>
      <div className="ml-[3px] flex">
        <TaskApp>
          <rect x="2" y="11" width="22" height="21" rx="1" fill="#2b2b2d" />
          <rect x="9" y="4" width="22" height="20" rx="1" fill="#f7f7f7" />
          <rect x="9" y="11" width="15" height="13" fill="#b9b9bb" />
        </TaskApp>
        <TaskApp>
          <path d="M3 32l2-6C-1 15 6 4 17 4c17 1 18 27-1 28H3z" fill="#6a5bc4" />
          <rect x="8" y="13" width="11" height="12" rx="2" fill="#fff" />
          <path d="M20 17l5-4v12l-5-4z" fill="#fff" />
          <circle cx="27" cy="6.500" r="10" fill="#4b6bdd" />
          <text x="27" y="11" fontSize="12.500" fill="#fff" textAnchor="middle" fontFamily='"Open Sans", sans-serif'>1</text>
        </TaskApp>
        <TaskApp dot>
          <circle cx="17" cy="17.500" r="15" fill="#1470c4" />
          <path d="M3 14C6 3 16 1 22 4c9 4 12 12 9 16-3 4-10 3-10 0 2-3 0-7-4-8-6-2-11 0-14 2z" fill="#45d08e" />
          <path d="M3 14C6 3 18 0 24 5c-4 2-8 7-7 7-6-1-10-1-14 2z" fill="#2bb3d8" />
          <path d="M14 15c-3 6 3 13 9 13 3 0 5-1 7-2-5 8-15 9-21 3-5-6-3-13 5-14z" fill="#0c4c96" />
          <path d="M14 17c1-4 6-4 7-1 1 3-1 3 0 5 1 2 6 3 10 1-2 6-10 7-14 3-2-2-3-5-3-8z" fill="#e8dcdc" />
        </TaskApp>
        <TaskApp dot>
          <path d="M2 5h10l4 3h16v8H2z" fill="#dd9a10" />
          <rect x="2" y="9" width="30" height="22" rx="1" fill="#ffcf4a" />
          <path d="M7 31v-5c0-1.500 1-2.500 2.500-2.500h15c1.500 0 2.500 1 2.500 2.500v5z" fill="#1480d4" />
          <path d="M11 27.500h12" stroke="#0a4c8c" strokeWidth="1.300" />
        </TaskApp>
        <TaskApp>
          <circle cx="17" cy="17.500" r="15" fill="#2ba24c" />
          <path d="M4 10A15 15 0 0 1 30 10H17l-6.500 11z" fill="#e33b2e" />
          <path d="M30 10a15 15 0 0 1-13 22.500L23.500 21 17 10z" fill="#fcc934" />
          <circle cx="17" cy="17.500" r="7.500" fill="#fff" />
          <circle cx="17" cy="17.500" r="5.800" fill="#2d7ff0" />
        </TaskApp>
        <TaskApp>
          <path d="M2 14L17 4l15 10v3H2z" fill="#0a62b8" />
          <path d="M5 13h24v10H5z" fill="#f4f4f4" />
          <path d="M2 13l15 10L32 13v19H2z" fill="#2aa8ec" />
          <path d="M2 32l15-11 15 11z" fill="#1488d8" />
        </TaskApp>
        <TaskApp>
          <circle cx="17" cy="17.500" r="14" stroke="#111" strokeWidth="2" />
          <text x="17" y="21.500" fontSize="10.500" fontWeight="800" fill="#111" textAnchor="middle" textLength="24" lengthAdjust="spacingAndGlyphs" fontFamily='"Open Sans", sans-serif'>DELL</text>
        </TaskApp>
        <TaskApp dot>
          <path d="M4 3l13 6 13-6v22l-13 7.500L4 25z" fill="#c8302e" />
          <path d="M10 12l7 4 7-4v10l-7 4-7-4z" fill="#e9dcdf" />
        </TaskApp>
        <TaskApp dot>
          <rect x="4" y="5" width="26" height="26" fill="#c5ef2f" />
          <path d="M4 5h14L4 20z" fill="#2fd36b" />
          <rect x="8" y="9" width="18" height="18" fill="#0a0a0a" />
          <text x="16.500" y="18.500" fontSize="9.500" fontWeight="700" fill="#fff" textAnchor="middle" fontFamily='"Open Sans", sans-serif'>PC</text>
          <path d="M10 24h7" stroke="#fff" strokeWidth="1.500" />
        </TaskApp>
        <TaskApp dot>
          <circle cx="17" cy="17.500" r="14.500" fill="#1d8df2" />
          <path d="M8 10l11-3 6 3v8H9v7H7z" fill="#e8f4ff" fillOpacity="0.800" />
          <circle cx="20" cy="21.500" r="5" stroke="#fff" strokeWidth="3" />
          <circle cx="20" cy="21.500" r="7" stroke="#fff" strokeWidth="2" strokeDasharray="2.700 2.700" />
          <path d="M9 14l4 4 4-5 4 3" stroke="#1d8df2" strokeWidth="1.500" />
        </TaskApp>
        <div className="mt-[6px] ml-[5px] flex h-[48px] w-[44px] flex-col items-center rounded-[5px] border border-[#f4f0f8] bg-[#efecf3] pt-[9px] shadow-[3px_0_0_#ece7f0]">
          <svg width="30" height="30" viewBox="0 0 30 30">
            <rect width="30" height="30" fill="#4b6bdd" />
            <rect x="16" width="10" height="30" fill="#d99a12" />
            <rect x="9" y="7" width="10" height="23" fill="#efbf35" />
            <rect x="3" y="15" width="10" height="15" fill="#ffe078" />
          </svg>
          <span className="mt-[4px] h-[4px] w-[20px] shrink-0 rounded-full bg-[#4b6bdd]" />
        </div>
      </div>
      <svg width="76" height="61" viewBox="1550 1019 76 61" className="ml-auto" fill="none" stroke="#1b1b1b" strokeWidth="1.500">
        <path d="M1556.500 1053l6.500-6 6.500 6" />
        <path d="M1598 1055.500c-6 0-6-7-1-8 2-7 11-7 13-1 4 1 4 9-1 9z" fill="#e8e8ea" />
        <path d="M1599 1050l6-7 6 5-5 2z" fill="#97979b" stroke="none" />
      </svg>
      <div className="w-[50px] pt-[11px] text-center text-[14px] leading-[20px]">
        ENG
        <br />
        IN
      </div>
      <svg width="92" height="61" viewBox="1682 1019 92 61" className="ml-[6px]" fill="none" stroke="#1b1b1b" strokeWidth="1.400">
        <path d="M1688.500 1047c5-7 14-7 19 0M1691.500 1050c4-5 9-5 13 0M1694.500 1052.500c2-3 5-3 7 0" />
        <circle cx="1698" cy="1054.500" r="1.500" fill="#1b1b1b" />
        <path d="M1719 1047h3l5-4v14l-5-4h-3zM1729 1047c1.500 2 1.500 4 0 6M1731.500 1044.500c3 4 3 7 0 11" />
        <path d="M1734.500 1042.500c4 5 4 10 0 15" stroke="#b4adb3" />
        <path d="M1754 1044.500h9c1.500 0 2 1 2 2v7c0 1.500-1 2-2 2h-12c-1.500 0-2-1-2-2v-4" />
        <path d="M1766.500 1048v4" strokeWidth="3" />
        <path d="M1752 1039.500l-4 6.500h3l-1 5 5-7h-3z" fill="#1b1b1b" stroke="none" />
        <path d="M1751.500 1053.500h4v-4.500z" fill="#1b1b1b" stroke="none" />
      </svg>
      <div className="w-[92px] pt-[9.500px] text-right leading-[20px] whitespace-nowrap">
        20:53
        <br />
        07-02-2024
      </div>
      <svg width="54" height="61" viewBox="1866 1019.500 54 61" fill="#1d2fa5">
        <path d="M1877 1056l2-3v-5c0-9 12-9 12 0v5l2 3zM1882 1057.500h6c-1 3-5 3-6 0z" />
      </svg>
    </footer>
  );
}

export default function App() {
  return (
    <div className="flex h-[1080px] w-[1920px] flex-col overflow-hidden bg-[#f3f2f1] font-['Open_Sans',sans-serif] text-[#252423]">
      <TitleBar />
      <Ribbon />
      <main className="flex h-[790px] shrink-0">
        <Rail />
        <div className="flex min-w-0 flex-1 flex-col">
          <div className="flex min-h-0 flex-1">
            <div className="flex w-[1166px] shrink-0 flex-col">
              <Report />
              <div className="flex-1 bg-white" />
            </div>
            <Filters />
          </div>
          <PageTabs />
        </div>
        <div className="flex w-[451px] shrink-0">
          <Visualizations />
          <DataPane />
        </div>
      </main>
      <StatusBar />
      <Taskbar />
    </div>
  );
}
